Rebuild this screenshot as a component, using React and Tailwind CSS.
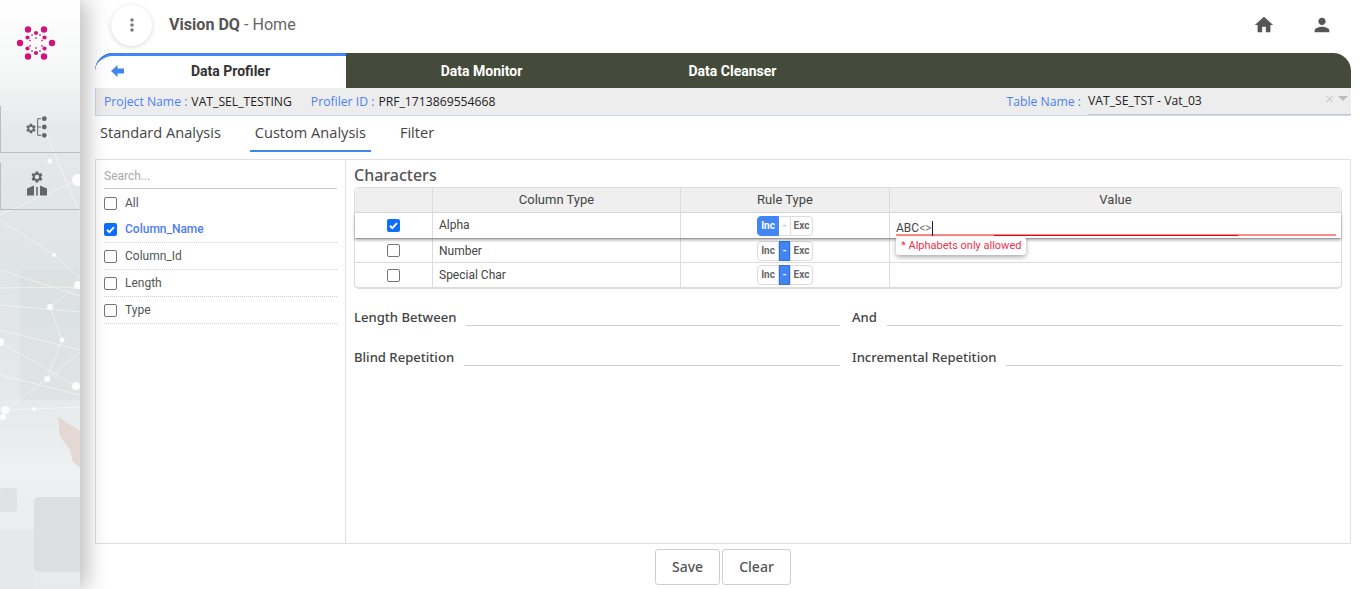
import React from "react";
import { MdHome, MdPerson, MdMoreVert } from "react-icons/md";

const sans = "font-['Open_Sans','Noto_Sans',sans-serif]";
const noto = "font-['Noto_Sans','Open_Sans',sans-serif]";
const gear = "M19.14 12.94c.04-.3.06-.61.06-.94 0-.32-.02-.64-.07-.94l2.03-1.58a.49.49 0 0 0 .12-.61l-1.92-3.32a.488.488 0 0 0-.59-.22l-2.39.96c-.5-.38-1.03-.7-1.62-.94l-.36-2.54a.484.484 0 0 0-.48-.41h-3.84c-.24 0-.43.17-.47.41l-.36 2.54c-.59.24-1.13.57-1.62.94l-2.39-.96c-.22-.08-.47 0-.59.22L2.74 8.87c-.12.21-.08.47.12.61l2.03 1.58c-.05.3-.09.63-.09.94s.02.64.07.94l-2.03 1.58a.49.49 0 0 0-.12.61l1.92 3.32c.12.22.37.29.59.22l2.39-.96c.5.38 1.03.7 1.62.94l.36 2.54c.05.24.24.41.48.41h3.84c.24 0 .44-.17.47-.41l.36-2.54c.59-.24 1.13-.56 1.62-.94l2.39.96c.22.08.47 0 .59-.22l1.92-3.32c.12-.22.07-.47-.12-.61l-2.01-1.58zM12 15.6c-1.98 0-3.6-1.62-3.6-3.6s1.62-3.6 3.6-3.6 3.6 1.62 3.6 3.6-1.62 3.6-3.6 3.6z";

function Logo() {
  const big = [[20, 33], [52, 33], [28, 19.5], [44, 19.5], [28, 46.5], [44, 46.5]];
  const mid = [[36, 23], [36, 43], [27.5, 27.5], [44.5, 27.5], [27.5, 38.5], [44.5, 38.5]];
  const small = [[32, 25], [40, 25], [30, 30.5], [42, 30.5], [30, 36], [42, 36], [32, 41], [40, 41], [36, 28], [36, 38]];
  return (
    <svg width="72" height="66" viewBox="0 0 72 66" className="block">
      <g fill="#d2137d">
        {big.map(([x, y], i) => <circle key={i} cx={x} cy={y} r="3.2" />)}
        {mid.map(([x, y], i) => <circle key={i} cx={x} cy={y} r="2.1" />)}
        {small.map(([x, y], i) => <circle key={i} cx={x} cy={y} r="1.1" opacity="0.7" />)}
      </g>
    </svg>
  );
}

function TreeIcon() {
  return (
    <svg width="24" height="24" viewBox="0 0 24 24" fill="#666">
      <g transform="translate(0 6.5) scale(0.5)"><path d={gear} /></g>
      <path d="M16 2.7h-3.3v16.6H16M12.7 11H16" fill="none" stroke="#666" strokeWidth="1" />
      <circle cx="19.3" cy="2.7" r="2.4" />
      <circle cx="19.3" cy="11" r="2.4" />
      <circle cx="19.3" cy="19.3" r="2.4" />
    </svg>
  );
}

function AdminIcon() {
  return (
    <svg width="22" height="26" viewBox="0 0 22 26" fill="#666">
      <g transform="translate(4 0) scale(0.58)"><path d={gear} /></g>
      <path d="M1 18.5l7-3v10H1zM21 18.5l-7-3v10h7z" />
      <path d="M10.2 17h1.6v8.5h-1.6z" />
    </svg>
  );
}

function Network() {
  const nodes = [[50, 161, 2.5], [78, 180, 6], [54, 255, 2], [78, 285, 4], [50, 307, 3], [62, 340, 2.5], [0, 342, 4], [47, 379, 3], [76, 386, 4], [5, 410, 4], [3, 417, 3], [34, 409, 2]];
  const lines = [
    [0, 220, 54, 255], [54, 255, 80, 278], [78, 285, 50, 307], [50, 307, 62, 340], [62, 340, 47, 379], [47, 379, 5, 410],
    [0, 342, 76, 386], [0, 288, 80, 287], [5, 410, 80, 407], [47, 379, 80, 352], [0, 215, 78, 180], [0, 305, 80, 312],
    [0, 330, 80, 350], [0, 375, 80, 395], [45, 130, 80, 215], [0, 270, 80, 296],
  ];
  return (
    <svg className="absolute inset-0 w-full h-full" viewBox="0 0 80 589" preserveAspectRatio="none">
      <path d="M20 270h60v130H20z" fill="#d4d9db" opacity="0.35" />
      <rect x="34" y="497" width="50" height="75" rx="5" fill="#dcdee0" />
      <rect x="0" y="488" width="17" height="24" rx="2" fill="#e0e2e3" />
      <rect x="0" y="530" width="34" height="59" fill="#e6e8e9" />
      <path d="M58 417l22 14v36l-7-5-3-12-10-14z" fill="#e4d8d4" />
      <g stroke="#ffffff" strokeWidth="0.8" opacity="0.6">
        {lines.map(([a, b, c, d], i) => <line key={i} x1={a} y1={b} x2={c} y2={d} />)}
      </g>
      <g fill="#ffffff" opacity="0.9">
        {nodes.map(([x, y, r], i) => <circle key={i} cx={x} cy={y} r={r} />)}
      </g>
    </svg>
  );
}

function Sidebar() {
  return (
    <aside className="relative z-10 w-20 shrink-0 h-[589px] overflow-hidden bg-[linear-gradient(180deg,#ffffff_0%,#f6f7f7_12%,#e6e8e9_22%,#dfe4e6_45%,#e4e8ea_65%,#eef0f1_80%,#e8e9ea_100%)] shadow-[6px_0_22px_rgba(0,0,0,0.28)]">
      <Network />
      <div className="relative flex flex-col">
        <div className="h-[66px] mt-[10px]"><Logo /></div>
        <div className="mt-[30px] h-[47px] border-l border-b border-[#bdbdbd] flex items-center justify-center pr-[8px] pb-[2px]"><TreeIcon /></div>
        <div className="mt-[10px] h-[47px] border-l border-b border-[#bdbdbd] flex items-center justify-center pr-[7px] pb-[6px]"><AdminIcon /></div>
      </div>
    </aside>
  );
}

function Box({ checked }) {
  return checked ? (
    <span className="w-[13px] h-[13px] rounded-[2px] bg-[#0d6efd] flex items-center justify-center shrink-0">
      <svg width="11" height="11" viewBox="0 0 12 12"><path d="M2.2 6.3l2.6 2.6 5-5.4" fill="none" stroke="#fff" strokeWidth="2.1" /></svg>
    </span>
  ) : (
    <span className="w-[13px] h-[13px] rounded-[2px] border border-[#767676] bg-white shrink-0" />
  );
}

function Toggle({ on }) {
  return (
    <div className="flex h-5 w-[56px] text-[10px] font-bold leading-[18px] text-center">
      <span className={on ? "w-[22px] rounded-l-[4px] bg-[#4285f4] text-white border border-[#4285f4]" : "w-[22px] rounded-l-[4px] border border-[#dcdcdc] text-[#666] bg-white"}>Inc</span>
      <span className={on ? "w-[11px] border-y border-[#dcdcdc] text-[#bbb] bg-white" : "w-[11px] bg-[#4285f4] border border-[#2f6fd8] text-white"}>-</span>
      <span className="w-[23px] rounded-r-[4px] border border-[#dcdcdc] text-[#666] bg-white">Exc</span>
    </div>
  );
}

function Row({ label, checked, on, h, children }) {
  return (
    <div className={"grid grid-cols-[78px_248px_209px_1fr] text-xs text-[#444] " + h + " " + (on ? "relative bg-white shadow-[0_2px_3px_rgba(0,0,0,0.35)]" : "border-t border-[#dcdcdc]")}>
      <div className="flex items-center justify-center border-r border-[#dcdcdc]"><Box checked={checked} /></div>
      <div className={"flex items-center pl-[6px] border-r border-[#dcdcdc] " + (on ? "pb-[2px]" : "")}>{label}</div>
      <div className="flex items-center justify-center border-r border-[#dcdcdc]"><Toggle on={on} /></div>
      <div className="relative">{children}</div>
    </div>
  );
}

function Field({ label }) {
  return (
    <div className="flex items-end">
      <span className={"text-[13.1px] font-medium text-[#444] leading-5 whitespace-nowrap " + noto}>{label}</span>
      <span className="h-[1px] bg-[#cfcfcf] ml-[10px] flex-1 mb-[1px]" />
    </div>
  );
}

function ListItem({ label, checked, first }) {
  return (
    <div className={"flex items-center gap-[8px] text-xs " + (first ? "h-[26px] mt-[1px] " : "h-[27px] border-b border-dotted border-[#d0d0d0] ") + (checked ? "text-[#4c7df0] font-medium" : "text-[#555]")}>
      <Box checked={checked} />
      <span>{label}</span>
    </div>
  );
}

export default function App() {
  return (
    <div className="flex h-[589px] w-[1366px] overflow-hidden bg-white font-['Roboto',sans-serif]">
      <Sidebar />
      <main className="w-[1271px] ml-[15px] flex flex-col shrink-0">
        <header className="h-[53px] flex items-center">
          <div className="ml-[16px] w-[41px] h-[41px] -mt-[3px] rounded-full bg-white shadow-[0_1px_5px_rgba(0,0,0,0.16)] flex items-center justify-center text-[#777]">
            <MdMoreVert size={20} />
          </div>
          <h1 className="ml-[17px] text-[16.1px] text-[#666] -mt-[3px]"><span className="font-bold text-[#555]">Vision DQ</span> - Home</h1>
          <div className="ml-auto flex items-center text-[#555] -mt-[3px]">
            <MdHome size={22} />
            <MdPerson size={22} className="ml-[36px] mr-[33px]" />
          </div>
        </header>

        <nav className="w-[1256px] h-[35px] flex bg-[#454b3a] rounded-t-[18px] text-white text-sm font-bold">
          <div className="relative w-[251px] pl-5 bg-white text-[#333] border-t-[3px] border-[#4285f4] rounded-tl-[18px] flex items-center justify-center pb-[2px]">
            <svg width="13" height="12" viewBox="0 0 13 12" className="absolute left-[16px] top-[9px]">
              <path d="M6.5 0L0 6l6.5 6V8.5H13v-5H6.5z" fill="#4285f4" />
            </svg>
            Data Profiler
          </div>
          <div className="w-[251px] pl-5 flex items-center justify-center">Data Monitor</div>
          <div className="w-[251px] pl-5 flex items-center justify-center">Data Cleanser</div>
        </nav>

        <div className={"w-[1256px] h-[28px] bg-[#ededed] border-l border-b border-[#c9d8f0] flex items-center text-[12.2px] text-[#222] pl-[8px] pt-[1px] " + sans}>
          <span className="text-[#4c82f0]">Project Name :</span>
          <span className="ml-[4px]">VAT_SEL_TESTING</span>
          <span className="ml-[19px] text-[#4c82f0]">Profiler ID :</span>
          <span className="ml-[4px]">PRF_1713869554668</span>
          <span className="ml-auto text-[#4c82f0]">Table Name :</span>
          <div className="relative ml-[7px] w-[263px] h-full flex items-center border-b border-[#c8c8c8]">
            VAT_SE_TST - Vat_03
            <span className="absolute right-[3px] top-[4px] flex items-center gap-[4px] text-[#ccc] text-[11px] leading-none">
              ✕
              <span className="w-0 h-0 border-x-[5px] border-x-transparent border-t-[5px] border-t-[#bbb]" />
            </span>
          </div>
        </div>

        <div className={"h-[36px] flex text-[14.6px] text-[#444] " + sans}>
          <div className="ml-[5px] pt-[6px]">Standard Analysis</div>
          <div className="ml-[29px] pt-[6px] border-b-[2px] border-[#4285f4] w-[121px] text-center whitespace-nowrap">Custom Analysis</div>
          <div className="ml-[29px] pt-[6px]">Filter</div>
        </div>

        <section className="mt-[7px] w-[1256px] h-[385px] border border-[#dfdfdf] flex">
          <div className="w-[250px] border-r border-[#dfdfdf] px-2 pt-[3px] shrink-0">
            <div className="h-[26px] border-b border-[#c8c8c8] text-xs text-[#aaa] flex items-center">Search...</div>
            <ListItem label="All" first />
            <ListItem label="Column_Name" checked />
            <ListItem label="Column_Id" />
            <ListItem label="Length" />
            <ListItem label="Type" />
          </div>
          <div className="flex-1 pl-2 pr-2 min-w-0">
            <h2 className={"text-base text-[#555] font-medium h-[27px] leading-[30px] " + noto}>Characters</h2>
            <div className="border border-[#dcdcdc] border-b-2 rounded-[5px] w-[988px]">
              <div className="grid grid-cols-[78px_248px_209px_1fr] h-[25px] bg-[#efefef] rounded-t-[5px] border-b border-[#dcdcdc] text-[13px] text-[#444] text-center leading-[23px]">
                <div className="border-r border-[#dcdcdc]" />
                <div className="border-r border-[#dcdcdc]">Column Type</div>
                <div className="border-r border-[#dcdcdc]">Rule Type</div>
                <div>Value</div>
              </div>
              <Row label="Alpha" checked on h="h-[25px]">
                <div className="absolute left-[6px] right-[5px] top-[4px] h-[19px] border-b-2 border-[#f98a8a] text-xs text-[#444] leading-[23px]">
                  <span>ABC</span><span className="text-[#777]">&lt;&gt;</span><span className="inline-block w-[1px] h-[15px] bg-[#222] align-middle" />
                  <span className="absolute left-[98px] w-[244px] -bottom-[2px] h-[1px] bg-[#d80f0f]" />
                </div>
                <div className="absolute z-10 left-[6px] top-[24px] h-[18px] px-[5px] bg-white rounded-[3px] shadow-[0_2px_5px_rgba(0,0,0,0.35)] text-[11px] leading-[17px] text-[#f0304a] whitespace-nowrap">* Alphabets only allowed</div>
              </Row>
              <Row label="Number" h="h-[24px]" />
              <Row label="Special Char" h="h-[25px]" />
            </div>
            <div className="grid grid-cols-[486px_490px] gap-x-[12px] gap-y-[20px] mt-[18px] w-[988px]">
              <Field label="Length Between" />
              <Field label="And" />
              <Field label="Blind Repetition" />
              <Field label="Incremental Repetition" />
            </div>
          </div>
        </section>

        <div className={"w-[1256px] flex justify-center gap-[2px] mt-[5px] text-sm font-medium text-[#555] " + noto}>
          <button className="w-[65px] h-[36px] border border-[#cfcfcf] rounded-[3px] bg-white">Save</button>
          <button className="w-[69px] h-[36px] border border-[#cfcfcf] rounded-[3px] bg-white">Clear</button>
        </div>
      </main>
    </div>
  );
}
